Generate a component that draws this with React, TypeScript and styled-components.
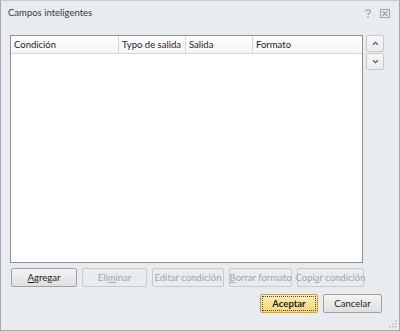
import React from "react";
import styled, { createGlobalStyle, css } from "styled-components";

const GlobalStyle = createGlobalStyle`
  html, body {
    margin: 0;
    padding: 0;
    background: #e9ecee;
  }
  body {
    font-family: Lato, "Noto Sans", sans-serif;
    font-size: 9.5px;
    color: #1e1e1e;
  }
`;

const Window = styled.div`
  position: relative;
  width: 400px;
  height: 331px;
  box-sizing: border-box;
  border: 1px solid #a4a7ab;
  border-top-color: #c9ccd0;
  background: #e9ecee;
  display: flex;
  flex-direction: column;
`;

const TitleBar = styled.div`
  height: 34px;
  display: flex;
  align-items: flex-start;
  justify-content: space-between;
  padding: 6px 9px 0 7px;
  box-sizing: border-box;
`;

const Title = styled.div`
  font-size: 9.5px;
  color: #3a3a3a;
`;

const Caption = styled.div`
  display: flex;
  gap: 8px;
  margin-top: 2px;
`;

const Main = styled.div`
  display: flex;
  gap: 3px;
  padding-left: 9px;
`;

const ListBox = styled.div`
  width: 353px;
  height: 228px;
  box-sizing: border-box;
  border: 1px solid #8e9297;
  background: #fff;
`;

const Header = styled.div`
  display: grid;
  grid-template-columns: 108px 67px 67px 1fr;
  height: 17px;
  border-bottom: 1px solid #d5d5d5;
  background: linear-gradient(#ffffff, #f3f4f5);
`;

const HeaderCell = styled.div`
  display: flex;
  align-items: center;
  padding-left: 3px;
  border-right: 1px solid #d5d7da;
  color: #1e1e1e;
  white-space: nowrap;
  overflow: hidden;
  &:last-child {
    border-right: none;
  }
`;

const SideButtons = styled.div`
  display: flex;
  flex-direction: column;
  gap: 1px;
`;

const ArrowButton = styled.div`
  width: 18px;
  height: 17px;
  box-sizing: border-box;
  border: 1px solid #c6cacd;
  border-radius: 2px;
  background: linear-gradient(#f5f6f7, #eaecee);
  display: flex;
  align-items: center;
  justify-content: center;
`;

const ButtonRow = styled.div`
  display: flex;
  gap: 5px;
  margin-top: 5px;
  padding-left: 10px;
`;

const Footer = styled.div`
  display: flex;
  justify-content: flex-end;
  gap: 5px;
  margin-top: 7px;
  padding-right: 17px;
`;

const Button = styled.div<{ $w: number; $disabled?: boolean; $primary?: boolean }>`
  width: ${(p) => p.$w}px;
  height: 19px;
  box-sizing: border-box;
  border: 1px solid #9ea2a6;
  border-radius: 2px;
  background: linear-gradient(#f4f4f4, #dedfe0);
  display: flex;
  align-items: center;
  justify-content: center;
  color: #1e1e1e;
  white-space: nowrap;
  ${(p) =>
    p.$disabled &&
    css`
      border-color: #c8cbce;
      background: #e9ecee;
      color: #a3a6a9;
    `}
  ${(p) =>
    p.$primary &&
    css`
      position: relative;
      border-color: #c4a24a;
      background: linear-gradient(#fdefb6, #fbd76b);
      font-weight: bold;
      &::after {
        content: "";
        position: absolute;
        inset: 1px;
        border: 1px dotted #4a4a4a;
      }
    `}
`;

const Grip = styled.div`
  position: absolute;
  right: 2px;
  bottom: 2px;
  width: 9px;
  height: 9px;
`;

const U = styled.span`
  text-decoration: underline;
`;

const App = () => {
  return (
    <>
      <GlobalStyle />
      <Window>
        <TitleBar>
          <Title>Campos inteligentes</Title>
          <Caption>
            <svg width="8" height="9" viewBox="0 0 8 9">
              <path d="M1.5 2.5 Q1.5 0.8 4 0.8 Q6.5 0.8 6.5 2.5 Q6.5 3.8 4.5 4.5 L4 6" fill="none" stroke="#a2a5a8" strokeWidth="1.3" />
              <rect x="3.3" y="7" width="1.5" height="1.5" fill="#a2a5a8" />
            </svg>
            <svg width="10" height="9" viewBox="0 0 10 9">
              <rect x="0.5" y="0.5" width="9" height="8" fill="none" stroke="#a2a5a8" />
              <path d="M2.5 2 L7.5 7 M7.5 2 L2.5 7" stroke="#a2a5a8" strokeWidth="1.3" />
            </svg>
          </Caption>
        </TitleBar>
        <Main>
          <ListBox>
            <Header>
              <HeaderCell>Condición</HeaderCell>
              <HeaderCell>Typo de salida</HeaderCell>
              <HeaderCell>Salida</HeaderCell>
              <HeaderCell>Formato</HeaderCell>
            </Header>
          </ListBox>
          <SideButtons>
            <ArrowButton>
              <svg width="7" height="5" viewBox="0 0 7 5">
                <path d="M1 3.8 L3.5 1.3 L6 3.8" fill="none" stroke="#5a5e63" strokeWidth="1.3" />
              </svg>
            </ArrowButton>
            <ArrowButton>
              <svg width="7" height="5" viewBox="0 0 7 5">
                <path d="M1 1.2 L3.5 3.7 L6 1.2" fill="none" stroke="#5a5e63" strokeWidth="1.3" />
              </svg>
            </ArrowButton>
          </SideButtons>
        </Main>
        <ButtonRow>
          <Button $w={66}>
            <U>A</U>gregar
          </Button>
          <Button $w={65} $disabled>
            Eli<U>m</U>inar
          </Button>
          <Button $w={72} $disabled>
            Editar condición
          </Button>
          <Button $w={63} $disabled>
            <U>B</U>orrar formato
          </Button>
          <Button $w={67} $disabled>
            Copi<U>a</U>r condición
          </Button>
        </ButtonRow>
        <Footer>
          <Button $w={58} $primary>
            Aceptar
          </Button>
          <Button $w={59}>Cancelar</Button>
        </Footer>
        <Grip>
          <svg width="9" height="9" viewBox="0 0 9 9">
            {[
              [7, 1],
              [4, 4],
              [7, 4],
              [1, 7],
              [4, 7],
              [7, 7],
            ].map(([x, y], i) => (
              <rect key={i} x={x} y={y} width="1.5" height="1.5" fill="#b5b8bb" />
            ))}
          </svg>
        </Grip>
      </Window>
    </>
  );
};

export default App;
